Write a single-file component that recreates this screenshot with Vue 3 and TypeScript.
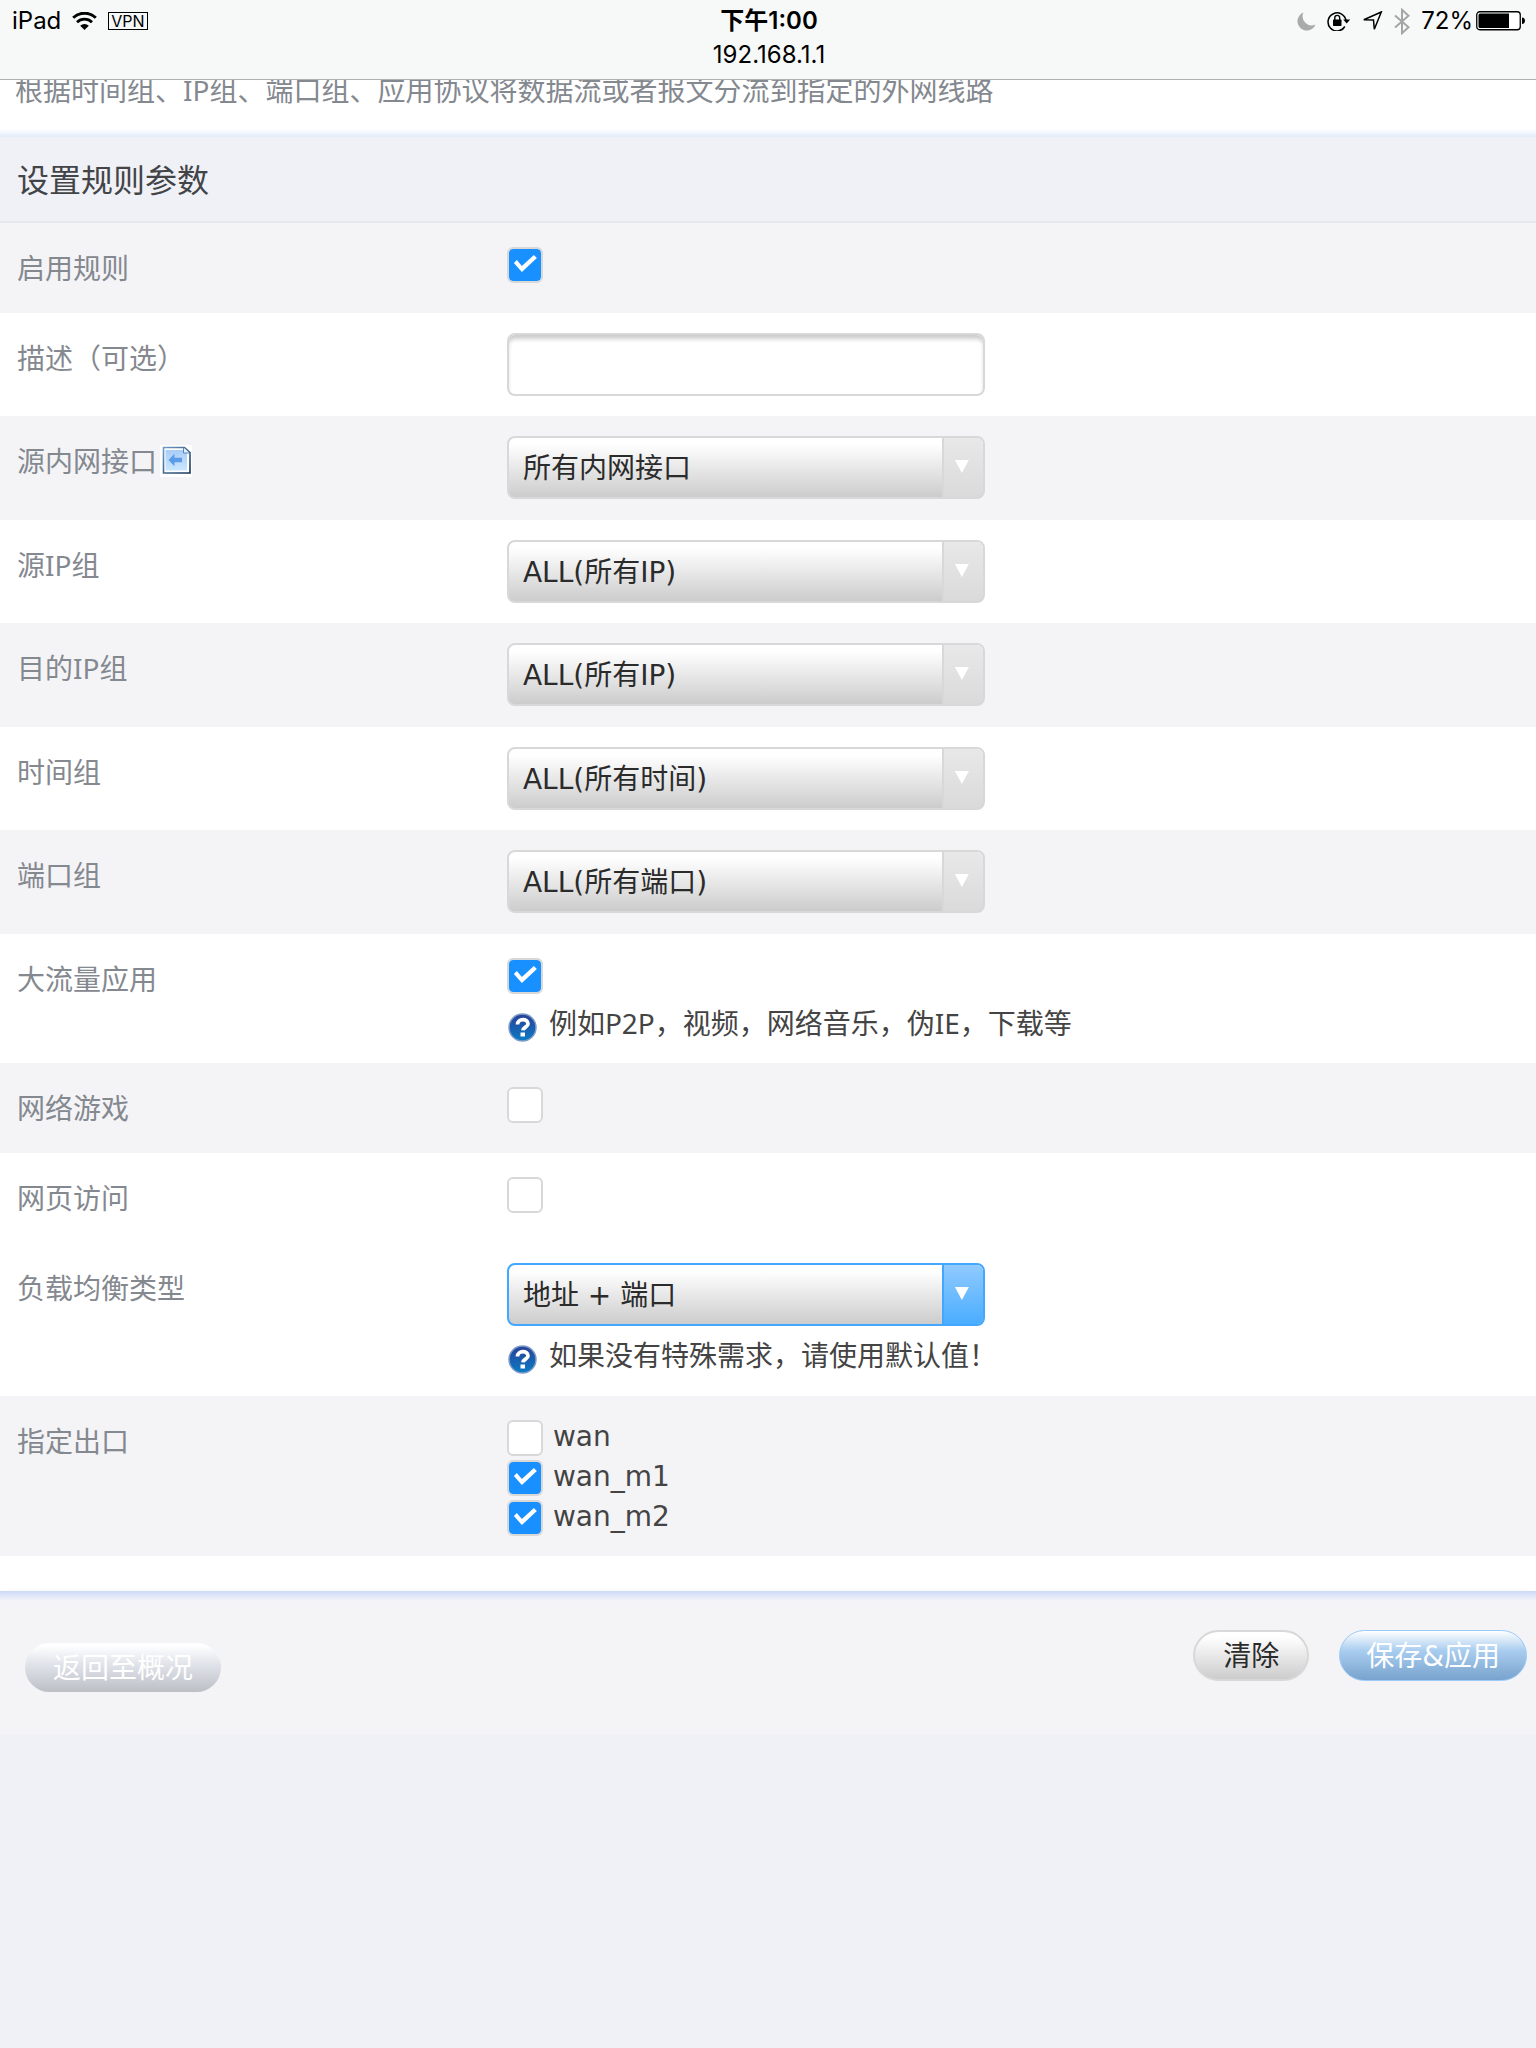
<script setup lang="ts">
import { ref } from 'vue'

interface SelectRow {
  id: string
  label: string
  value: string
  options: string[]
  icon?: boolean
}

interface Outlet {
  name: string
  checked: boolean
}

const enabled = ref(true)
const description = ref('')
const heavyTraffic = ref(true)
const games = ref(false)
const web = ref(false)
const balance = ref('地址 + 端口')

const selectRows = ref<SelectRow[]>([
  { id: 'lan', label: '源内网接口', value: '所有内网接口', options: ['所有内网接口'], icon: true },
  { id: 'src', label: '源IP组', value: 'ALL(所有IP)', options: ['ALL(所有IP)'] },
  { id: 'dst', label: '目的IP组', value: 'ALL(所有IP)', options: ['ALL(所有IP)'] },
  { id: 'time', label: '时间组', value: 'ALL(所有时间)', options: ['ALL(所有时间)'] },
  { id: 'port', label: '端口组', value: 'ALL(所有端口)', options: ['ALL(所有端口)'] },
])

const outlets = ref<Outlet[]>([
  { name: 'wan', checked: false },
  { name: 'wan_m1', checked: true },
  { name: 'wan_m2', checked: true },
])
</script>

<template>
  <div class="page">
    <header class="status">
      <div class="status-left">
        <span>iPad</span>
        <svg width="25" height="18" viewBox="0 0 25 18" aria-hidden="true">
          <path d="M1.2 5.8a16.2 16.2 0 0 1 22.6 0" fill="none" stroke="#000" stroke-width="3" />
          <path d="M5 10.200a10.800 10.800 0 0 1 15 0" fill="none" stroke="#000" stroke-width="2.800" />
          <path d="M8.200 13.800a6.200 6.200 0 0 1 8.600 0L12.500 18z" fill="#000" />
        </svg>
        <span class="vpn">VPN</span>
      </div>
      <div class="status-mid">
        <strong>下午1:00</strong>
        <span>192.168.1.1</span>
      </div>
      <div class="status-right">
        <svg width="19" height="19" viewBox="0 0 19 19" aria-hidden="true">
          <path d="M6.500 0.500A9.300 9.300 0 1 0 18.500 12.400A9 9 0 0 1 6.500 0.500z" fill="#aaa" />
        </svg>
        <svg width="24" height="20" viewBox="0 0 24 20" aria-hidden="true">
          <path d="M17.800 15.500A9 9 0 1 1 19 10" fill="none" stroke="#000" stroke-width="1.500" />
          <path d="M16.200 8.500h7L19.700 12.500z" fill="#000" />
          <rect x="6" y="8.500" width="8.500" height="6.500" rx="0.700" fill="#000" />
          <path d="M7.800 9V6.800a2.400 2.400 0 0 1 4.900 0V9" fill="none" stroke="#000" stroke-width="1.400" />
        </svg>
        <svg width="21" height="20" viewBox="0 0 21 20" aria-hidden="true">
          <path d="M19.300 1L1.800 8.800l9.700 0.200L12.300 18.200z" fill="none" stroke="#000" stroke-width="1.500" />
        </svg>
        <svg width="16" height="27" viewBox="0 0 16 27" aria-hidden="true">
          <path d="M1 7.500L14.500 19.200L8 25.200V1.800L14.500 7.800L1 19.500" fill="none" stroke="#a5a5a5" stroke-width="2" />
        </svg>
        <span class="percent">72%</span>
        <svg width="50" height="20" viewBox="0 0 50 20" aria-hidden="true">
          <rect x="0.750" y="0.750" width="43.500" height="18" rx="3" fill="#fff" stroke="#000" stroke-width="1.300" />
          <path d="M4 2.500h29v14.500H4a1.500 1.500 0 0 1-1.500-1.500V4A1.500 1.500 0 0 1 4 2.500z" fill="#000" />
          <path d="M46 6.500c4 0 4 6.500 0 6.500z" fill="#000" />
        </svg>
      </div>
    </header>

    <p class="intro">根据时间组、IP组、端口组、应用协议将数据流或者报文分流到指定的外网线路</p>

    <form @submit.prevent>
      <h1>设置规则参数</h1>

      <div class="row short shade">
        <label class="name" for="enabled">启用规则</label>
        <div class="field check-field"><input id="enabled" v-model="enabled" type="checkbox" /></div>
      </div>

      <div class="row">
        <label class="name" for="description">描述（可选）</label>
        <div class="field"><input id="description" v-model="description" type="text" /></div>
      </div>

      <div v-for="(row, i) in selectRows" :key="row.id" class="row" :class="{ shade: i % 2 === 0, tall: i % 2 === 0 }">
        <label class="name" :for="row.id">
          {{ row.label }}
          <svg v-if="row.icon" width="32" height="32" viewBox="0 0 32 32" aria-hidden="true">
            <defs>
              <linearGradient id="doc" x1="0" y1="0" x2="0" y2="1">
                <stop offset="0" stop-color="#a9cdf8" />
                <stop offset="1" stop-color="#c9e6ff" />
              </linearGradient>
              <linearGradient id="doc-edge" x1="0" y1="0" x2="1" y2="1">
                <stop offset="0" stop-color="#6d9cc8" />
                <stop offset="1" stop-color="#173255" />
              </linearGradient>
            </defs>
            <path d="M0 0h32v32H0z" fill="#fff" />
            <path d="M3.500 2.500h21l5.500 5V28h-26.500z" fill="#fff" stroke="url(#doc-edge)" stroke-width="1.600" />
            <path d="M5.500 5h18l3.500 3.500V25.500H5.500z" fill="url(#doc)" />
            <path d="M23.500 3v5h5.500" fill="#e8f3ff" stroke="#5786b8" />
            <path d="M8.500 15L14.500 8.800v4h7.500v4.500h-7.500v4z" fill="#5c9be8" />
          </svg>
        </label>
        <div class="field">
          <div class="select">
            <select :id="row.id" v-model="row.value">
              <option v-for="option in row.options" :key="option">{{ option }}</option>
            </select>
            <span class="arrow"></span>
          </div>
        </div>
      </div>

      <div class="row">
        <label class="name" for="heavy">大流量应用</label>
        <div class="field check-field">
          <input id="heavy" v-model="heavyTraffic" type="checkbox" />
          <p class="hint">
            <svg width="30" height="30" viewBox="0 0 30 30" aria-hidden="true">
              <defs>
                <linearGradient id="help" x1="0" y1="0" x2="0" y2="1">
                  <stop offset="0" stop-color="#2b3f98" />
                  <stop offset="1" stop-color="#0a7cc4" />
                </linearGradient>
              </defs>
              <circle cx="15.500" cy="14.500" r="13.500" fill="url(#help)" stroke="#7d9cc8" stroke-width="1.500" />
              <path d="M10.500 11.500c0-6.500 10.800-6.200 10.500-0.500c-0.200 3-4.800 3.200-5 6.300" fill="none" stroke="#fff" stroke-width="3.800" />
              <rect x="13.500" y="19.500" width="4.500" height="4" fill="#fff" />
            </svg>
            <span>例如P2P，视频，网络音乐，伪IE，下载等</span>
          </p>
        </div>
      </div>

      <div class="row short shade">
        <label class="name" for="games">网络游戏</label>
        <div class="field check-field"><input id="games" v-model="games" type="checkbox" /></div>
      </div>

      <div class="row short">
        <label class="name" for="web">网页访问</label>
        <div class="field check-field"><input id="web" v-model="web" type="checkbox" /></div>
      </div>

      <div class="row tall">
        <label class="name" for="balance">负载均衡类型</label>
        <div class="field">
          <div class="select active">
            <select id="balance" v-model="balance">
              <option>地址 + 端口</option>
            </select>
            <span class="arrow"></span>
          </div>
          <p class="hint">
            <svg width="30" height="30" viewBox="0 0 30 30" aria-hidden="true">
              <circle cx="15.500" cy="14.500" r="13.500" fill="url(#help)" stroke="#7d9cc8" stroke-width="1.500" />
              <path d="M10.500 11.500c0-6.500 10.800-6.200 10.500-0.500c-0.200 3-4.800 3.200-5 6.300" fill="none" stroke="#fff" stroke-width="3.800" />
              <rect x="13.500" y="19.500" width="4.500" height="4" fill="#fff" />
            </svg>
            <span>如果没有特殊需求，请使用默认值！</span>
          </p>
        </div>
      </div>

      <div class="row shade" role="group" aria-labelledby="outlets">
        <span id="outlets" class="name">指定出口</span>
        <div class="field check-field outlets">
          <label v-for="outlet in outlets" :key="outlet.name" class="outlet">
            <input v-model="outlet.checked" type="checkbox" />
            <span>{{ outlet.name }}</span>
          </label>
        </div>
      </div>

      <footer>
        <button type="button" class="back">返回至概况</button>
        <div class="actions">
          <button type="reset" class="clear">清除</button>
          <button type="submit" class="save">保存&amp;应用</button>
        </div>
      </footer>
    </form>
  </div>
</template>

<style>
body {
  margin: 0;
  background: #f0f1f6;
}
</style>

<style scoped>
* {
  box-sizing: border-box;
}

.page {
  font-family: 'DejaVu Sans', 'Noto Sans CJK SC', sans-serif;
  font-size: 28px;
  line-height: 40px;
  color: #444;
  background: #fff;
}

.status {
  position: relative;
  z-index: 1;
  display: grid;
  grid-template-columns: 1fr auto 1fr;
  height: 80px;
  padding: 4px 10px 0 12px;
  border-bottom: 1px solid #b0b0b0;
  background: #f7f8f8;
  color: #000;
  font-family: Inter, 'Noto Sans CJK SC', sans-serif;
  font-size: 24px;
  line-height: 34px;
}

.status-left,
.status-right {
  display: flex;
  align-items: center;
  height: 34px;
}

.status-left {
  gap: 11px;
}

.status-right {
  justify-content: flex-end;
  gap: 11px;
}

.percent {
  margin-right: -8px;
}

.status-mid {
  display: flex;
  flex-direction: column;
  align-items: center;
}

.status-mid strong {
  font-weight: 600;
}

.vpn {
  padding: 0 2px;
  border: 1px solid #000;
  font-size: 16px;
  line-height: 16px;
}

.intro {
  margin: -10px 0 0;
  padding: 0 15px 27px;
  color: #84888f;
  font-family: 'Noto Sans', 'Noto Sans CJK SC', sans-serif;
  background: linear-gradient(to top, #e2ebfb, #fff 8px);
}

h1 {
  margin: 0;
  padding: 22px 17px 18px;
  border-bottom: 2px solid #e5e7ec;
  background: #eff1f6;
  color: #434447;
  font-size: 32px;
  font-weight: 400;
  line-height: 44px;
}

.row {
  display: grid;
  grid-template-columns: 33% 1fr;
  align-items: start;
  padding: 20px 0;
}

.row.tall {
  padding-bottom: 21px;
}

.row.short {
  min-height: 90px;
}

.shade {
  background: #f4f4f7;
}

.name {
  display: flex;
  align-items: center;
  gap: 3px;
  padding: 5px 17px 0;
  color: #84888f;
  font-family: 'Noto Sans', 'Noto Sans CJK SC', sans-serif;
}

.field {
  max-width: 620px;
}

.check-field {
  padding-top: 4px;
}

input[type='checkbox'] {
  display: block;
  flex: none;
  width: 36px;
  height: 36px;
  margin: 0;
  border: 2px solid #d8d8d8;
  border-radius: 6px;
  appearance: none;
  background: #fff;
}

input[type='checkbox']:checked {
  background: #1890ff;
  background-clip: padding-box;
}

input[type='checkbox']:checked::before {
  display: block;
  width: 32px;
  height: 32px;
  background: #fff;
  clip-path: polygon(5px 14px, 8px 11px, 13px 17px, 25px 6px, 28px 9px, 13px 23px);
  content: '';
}

input[type='text'] {
  display: block;
  width: 478px;
  max-width: 100%;
  height: 63px;
  padding: 0 14px;
  border: 2px solid #d8d8d8;
  border-radius: 8px;
  outline: 0;
  background: #fff;
  box-shadow: inset 0 5px 4px -1px #ccc;
  color: #2b2b2b;
  font: inherit;
}

.select {
  position: relative;
  width: 478px;
  max-width: 100%;
}

select {
  display: block;
  width: 100%;
  height: 63px;
  margin: 0;
  padding: 2px 56px 0 14px;
  border: 2px solid #d8d8d8;
  border-radius: 8px;
  appearance: none;
  background: linear-gradient(#fff 10%, #ccc);
  color: #2b2b2b;
  font: inherit;
}

.arrow {
  position: absolute;
  top: 2px;
  right: 2px;
  bottom: 2px;
  width: 41px;
  border-left: 2px solid #d8d8d8;
  border-radius: 0 6px 6px 0;
  background: linear-gradient(#e8e8e8, #dadada);
  pointer-events: none;
}

.arrow::before {
  display: block;
  width: 14px;
  height: 13px;
  margin: 22px 0 0 11px;
  background: #fff;
  clip-path: polygon(0 0, 100% 0, 50% 100%);
  content: '';
}

.active select {
  border-color: #43a7ff;
}

.active .arrow {
  border-color: #43a7ff;
  background: linear-gradient(#90caff, #4aadff);
}

.hint {
  display: flex;
  align-items: flex-end;
  gap: 12px;
  margin: 9px 0 0;
  font-family: 'Noto Sans', 'Noto Sans CJK SC', sans-serif;
}

.outlets {
  display: grid;
  gap: 4px;
  justify-items: start;
}

.outlet {
  display: flex;
  align-items: flex-start;
  gap: 10px;
  height: 36px;
  line-height: 34px;
}

footer {
  display: flex;
  justify-content: space-between;
  align-items: flex-start;
  margin-top: 35px;
  padding: 39px 9px 43px 25px;
  background: linear-gradient(#cdd9f8, #f4f4f7 10px);
  box-shadow: 0 2px 6px #e8e9ec;
}

.actions {
  display: flex;
  gap: 30px;
}

button {
  height: 51px;
  padding: 2px 26px 0;
  border: 2px solid #d8d8d8;
  border-radius: 26px;
  background: linear-gradient(#fff 10%, #ccc);
  color: #2b2b2b;
  font: inherit;
}

.clear {
  padding: 2px 28px 0;
}

.back {
  height: 49px;
  margin-top: 13px;
  padding: 2px 28px 0;
  border: 0;
  background: linear-gradient(#fff 5%, #dfe2e9 45%, #bcc0c5);
  color: #fff;
}

.save {
  border: 1px solid #9cc9f8;
  background: linear-gradient(#fff, #a9cdef 40%, #78a3cd);
  color: #fff;
}
</style>
